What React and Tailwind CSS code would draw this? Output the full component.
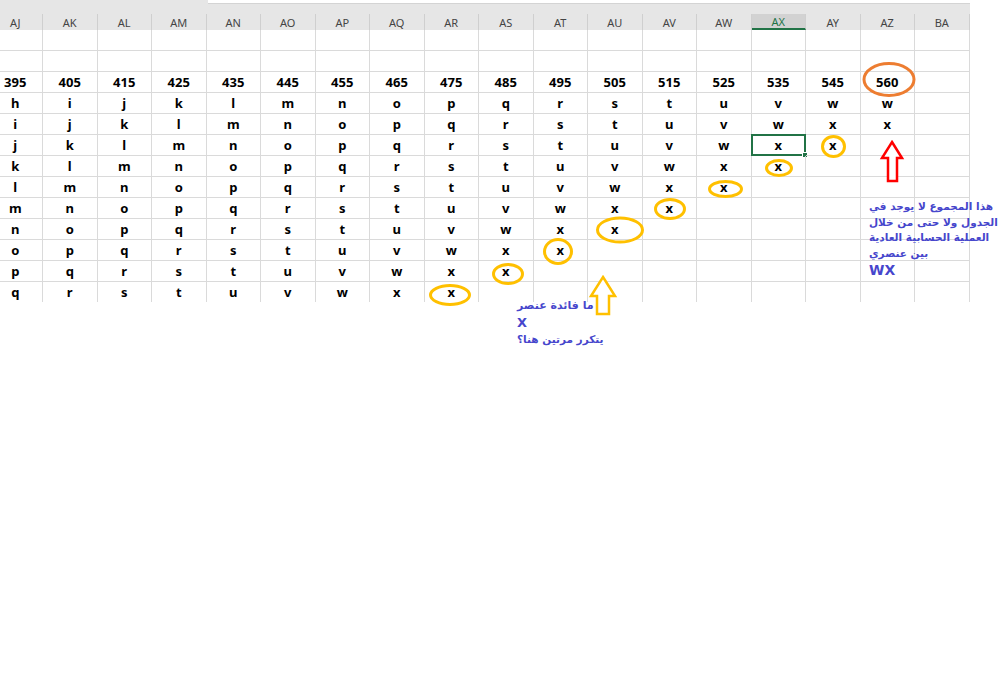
import React from 'react';

const cols = ['AJ', 'AK', 'AL', 'AM', 'AN', 'AO', 'AP', 'AQ', 'AR', 'AS', 'AT', 'AU', 'AV', 'AW', 'AX', 'AY', 'AZ', 'BA'];
const sums = ['395', '405', '415', '425', '435', '445', '455', '465', '475', '485', '495', '505', '515', '525', '535', '545', '560'];

const letterRows = [
  'hijklmnopqrstuvww',
  'ijklmnopqrstuvwxx',
  'jklmnopqrstuvwxx',
  'klmnopqrstuvwxx',
  'lmnopqrstuvwxx',
  'mnopqrstuvwxx',
  'nopqrstuvwxx',
  'opqrstuvwxx',
  'pqrstuvwxx',
  'qrstuvwxx',
];

// yellow marks around the repeated x
const marks = [
  [833.5, 146.5, 11, 10],
  [779, 168, 12.5, 7.5],
  [725.5, 189, 16, 7.5],
  [670, 209, 14.5, 9.5],
  [620, 230, 22.5, 12],
  [558, 251.5, 13.5, 12],
  [508, 274, 14.5, 9.5],
  [450, 295, 19.5, 9.5],
];

function Row({ cells, last, selectedCol }) {
  return (
    <div className={`flex ${last ? 'h-[20px]' : 'h-[21px]'}`}>
      {cols.map((c, i) => (
        <div
          key={c}
          className={`relative w-[54.5px] shrink-0 border-r border-[#dadada] ${last ? '' : 'border-b'} flex items-center justify-center text-[13px] font-bold text-black leading-none`}
        >
          {cells[i] || ''}
          {selectedCol === i && (
            <div className="absolute -left-px -top-px right-[-1px] bottom-[-1px] border-2 border-[#217346]">
              <div className="absolute -right-[4px] -bottom-[4px] w-[6px] h-[6px] bg-[#217346] border border-white" />
            </div>
          )}
        </div>
      ))}
    </div>
  );
}

export default function App() {
  return (
    <div className="relative w-[1000px] h-[685px] overflow-hidden bg-white font-['Noto_Sans',sans-serif]">
      {/* top strip with formula bar edge */}
      <div className="w-[970px] h-[5px] bg-[#e6e6e6]">
        <div className="ml-[208px] w-[762px] h-[4px] bg-white border-b border-[#d4d4d4]" />
      </div>

      <div className="ml-[-11.5px]">
        {/* column headers */}
        <div className="flex h-[25px] w-[981.5px] bg-[#e6e6e6]">
          {cols.map((c) => (
            <div key={c} className="w-[54.5px] shrink-0 pt-[9px]">
              <div
                className={`h-[16px] border-r border-[#cfcfcf] flex items-center justify-center text-[11px] leading-none ${
                  c === 'AX' ? 'bg-[#d2d2d2] text-[#217346] border-b-2 border-b-[#217346]' : 'text-[#444]'
                }`}
              >
                {c}
              </div>
            </div>
          ))}
        </div>

        <Row cells={[]} />
        <Row cells={[]} />
        <Row cells={sums} />
        {letterRows.map((r, i) => (
          <Row key={i} cells={r.split('')} last={i === letterRows.length - 1} selectedCol={i === 2 ? 14 : undefined} />
        ))}
      </div>

      {/* annotations */}
      <svg className="absolute left-0 top-0 pointer-events-none" width="1000" height="685" viewBox="0 0 1000 685">
        <ellipse cx="889" cy="79.5" rx="25" ry="16" fill="none" stroke="#ed7d31" strokeWidth="3" />
        {marks.map(([cx, cy, rx, ry], i) => (
          <ellipse key={i} cx={cx} cy={cy} rx={rx} ry={ry} fill="none" stroke="#ffc000" strokeWidth="3" />
        ))}
        <path d="M892 142 L902 158 L897 158 L897 181 L888 181 L888 158 L882 158 Z" fill="white" stroke="#ff0000" strokeWidth="2.5" strokeLinejoin="miter" />
        <path d="M603 277 L615 296 L609 296 L609 314 L597 314 L597 296 L591 296 Z" fill="white" stroke="#ffc000" strokeWidth="2.5" strokeLinejoin="miter" />
      </svg>

      <div className="absolute left-[517px] top-[297px] text-[#4646cc] font-bold font-['DejaVu_Sans',sans-serif] text-[10.5px] leading-[17px]">
        <div dir="rtl" className="text-left whitespace-nowrap text-[11px]">ما فائدة عنصر</div>
        <div className="text-[13px] leading-[17px]">X</div>
        <div dir="rtl" className="text-left whitespace-nowrap">يتكرر مرتين هنا؟</div>
      </div>

      <div className="absolute left-[869px] top-[199px] text-[#4646cc] font-bold font-['DejaVu_Sans',sans-serif] text-[10.5px] leading-[15.5px]">
        <div dir="rtl" className="text-left whitespace-nowrap">هذا المجموع لا يوجد في</div>
        <div dir="rtl" className="text-left whitespace-nowrap">الجدول ولا حتى من خلال</div>
        <div dir="rtl" className="text-left whitespace-nowrap">العملية الحسابية  العادية</div>
        <div dir="rtl" className="text-left whitespace-nowrap">بين عنصري</div>
        <div className="text-[14px] leading-[18px]">WX</div>
      </div>
    </div>
  );
}
